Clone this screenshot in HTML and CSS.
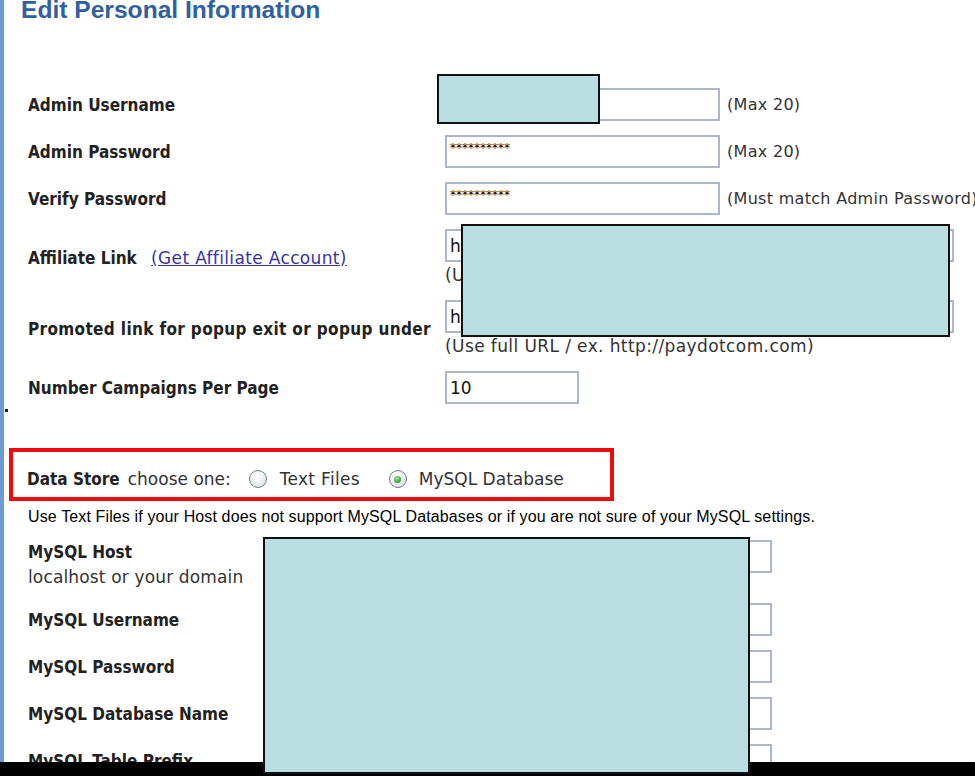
FILE: index.html
```html
<!DOCTYPE html>
<html lang="en">
<head>
<meta charset="utf-8">
<title>Edit Personal Information</title>
<link rel="stylesheet" href="styles.css">
</head>
<body>
<div class="page">
  <h1 class="title">Edit Personal Information</h1>
  <form class="form">
    <div class="grid">
      <label class="lbl">Admin Username</label>
      <div class="field field-inline">
        <input class="inp inp-md" type="text" value="">
        <span class="hint">(Max 20)</span>
      </div>

      <label class="lbl">Admin Password</label>
      <div class="field field-inline">
        <input class="inp inp-md inp-pw" type="text" value="**********">
        <span class="hint">(Max 20)</span>
      </div>

      <label class="lbl">Verify Password</label>
      <div class="field field-inline">
        <input class="inp inp-md inp-pw" type="text" value="**********">
        <span class="hint">(Must match Admin Password)</span>
      </div>

      <label class="lbl">Affiliate Link <a class="link" href="#">(Get Affiliate Account)</a></label>
      <div class="field">
        <input class="inp inp-lg" type="text" value="http://paydotcom.com/r/affiliate">
        <span class="help">(Use full URL / ex. http://paydotcom.com)</span>
      </div>

      <label class="lbl lbl-wide">Promoted link for popup exit or popup under</label>
      <div class="field">
        <input class="inp inp-lg" type="text" value="http://paydotcom.com/promoted">
        <span class="help">(Use full URL / ex. http://paydotcom.com)</span>
      </div>

      <label class="lbl">Number Campaigns Per Page</label>
      <div class="field">
        <input class="inp inp-sm" type="text" value="10">
      </div>
    </div>

    <div class="datastore">
      <span class="lbl">Data Store</span>
      <span class="ds-text">choose one:</span>
      <label class="opt opt-first"><input type="radio" name="ds" class="radio"><span class="opt-text opt-text-wide">Text Files</span></label>
      <label class="opt opt-second"><input type="radio" name="ds" class="radio" checked><span class="opt-text">MySQL Database</span></label>
    </div>

    <p class="note">Use Text Files if your Host does not support MySQL Databases or if you are not sure of your MySQL settings.</p>

    <div class="grid grid-sql">
      <label class="lbl lbl-host">MySQL Host<br><span class="sub">localhost or your domain</span></label>
      <div class="field field-top">
        <input class="inp inp-sql" type="text" value="localhost">
      </div>

      <label class="lbl">MySQL Username</label>
      <div class="field"><input class="inp inp-sql" type="text" value=""></div>

      <label class="lbl">MySQL Password</label>
      <div class="field"><input class="inp inp-sql" type="text" value=""></div>

      <label class="lbl">MySQL Database Name</label>
      <div class="field"><input class="inp inp-sql" type="text" value=""></div>

      <label class="lbl">MySQL Table Prefix</label>
      <div class="field"><input class="inp inp-sql" type="text" value=""></div>
    </div>
  </form>
</div>

<span class="speck"></span>
<div class="redact redact-user"></div>
<div class="redact redact-links"></div>
<div class="redact redact-sql"></div>
<div class="taskbar"></div>
</body>
</html>
```

FILE: styles.css
```css
html, body {
  margin: 0;
  height: 100%;
  overflow: hidden;
  background: #fff;
}

body {
  position: relative;
  font-family: "DejaVu Sans", Verdana, sans-serif;
  color: #222;
}

.page {
  box-sizing: border-box;
  height: 776px;
  border-left: 4px solid #6b9bd3;
  padding-left: 17px;
}

.title {
  margin: -4px 0 0;
  font: bold 24.6px/28px "Liberation Sans", Arial, sans-serif;
  color: #30609f;
}

.form {
  margin: 64px 0 0 7px;
}

.grid {
  display: grid;
  grid-template-columns: 417px 1fr;
  row-gap: 14px;
  align-items: center;
}

.lbl {
  font-family: "DejaVu Sans Condensed", "DejaVu Sans", sans-serif;
  font-weight: bold;
  font-size: 17px;
  color: #222;
  white-space: nowrap;
}

.lbl-wide {
  letter-spacing: 0.35px;
}

.link {
  margin-left: 9px;
  font-family: "DejaVu Sans", sans-serif;
  font-weight: normal;
  font-size: 17px;
  letter-spacing: 0.35px;
  color: #3a33a3;
  text-decoration: underline;
}

.field {
  display: flex;
  flex-direction: column;
  align-items: flex-start;
}

.field-inline {
  flex-direction: row;
  align-items: center;
  gap: 7px;
}

.field-top {
  align-self: start;
}

.inp {
  box-sizing: border-box;
  height: 33px;
  margin: 0;
  border: 2px solid #a8b7c9;
  padding: 0 3px;
  font: 17px "DejaVu Sans", sans-serif;
  color: #111;
  background: #fff;
  outline: none;
}

.inp-md { width: 275px; }
.inp-lg { width: 509px; }
.inp-sm { width: 134px; }
.inp-sql { width: 327px; }

.inp-pw {
  font-size: 12px;
  line-height: 13px;
  padding: 4px 3px 12px;
  color: #000;
}

.hint {
  font-size: 16px;
  letter-spacing: 0.3px;
  color: #333;
  white-space: nowrap;
}

.help {
  font-size: 17px;
  letter-spacing: 0.4px;
  line-height: 22px;
  padding-top: 2px;
  color: #333;
  white-space: nowrap;
}

.datastore {
  box-sizing: border-box;
  width: 605px;
  margin: 44px 0 0 -19px;
  border: 4px solid #ee0a0a;
  padding: 17px 0 8px 14px;
  display: flex;
  align-items: center;
  line-height: 20px;
}

.ds-text {
  margin-left: 8px;
  font-size: 17px;
  color: #333;
}

.opt {
  display: flex;
  align-items: center;
  font-size: 17px;
  color: #333;
}

.opt-first { margin-left: 18px; }
.opt-second { margin-left: 29px; }

.opt-text {
  margin-left: 12px;
}

.opt-text-wide {
  margin-left: 13px;
  letter-spacing: 0.3px;
}

.radio {
  -webkit-appearance: none;
  appearance: none;
  box-sizing: border-box;
  width: 18px;
  height: 18px;
  margin: 0;
  border: 1.5px solid #6c7f95;
  border-radius: 50%;
  background: radial-gradient(circle at 40% 35%, #fff 0, #f4f4f4 40%, #d4d6d8 100%);
  display: inline-grid;
  place-content: center;
}

.radio:checked::before {
  content: "";
  width: 7px;
  height: 7px;
  border-radius: 50%;
  background: radial-gradient(circle at 40% 35%, #9fe89f, #2e9e2e 70%);
}

.note {
  margin: 5px 0 0;
  font: 16px/21px "Liberation Sans", Arial, sans-serif;
  letter-spacing: 0.13px;
  color: #000;
  white-space: nowrap;
}

.grid-sql {
  margin-top: 13px;
}

.lbl-host {
  align-self: start;
  line-height: 24.5px;
}

.sub {
  font-family: "DejaVu Sans", sans-serif;
  font-weight: normal;
  font-size: 17px;
  letter-spacing: 0.15px;
  color: #333;
}

.speck {
  position: absolute;
  left: 5px;
  top: 409px;
  width: 3px;
  height: 3px;
  background: #222;
}

.redact {
  position: absolute;
  box-sizing: border-box;
  background: #b9dfe2;
  border: 2px solid #111;
  z-index: 2;
}

.redact-user { left: 437px; top: 74px; width: 163px; height: 50px; }
.redact-links { left: 461px; top: 224px; width: 489px; height: 113px; }
.redact-sql { left: 263px; top: 537px; width: 487px; height: 237px; }

.taskbar {
  position: fixed;
  left: 0;
  right: 0;
  bottom: 0;
  height: 14px;
  background: #000;
  z-index: 1;
}
```
